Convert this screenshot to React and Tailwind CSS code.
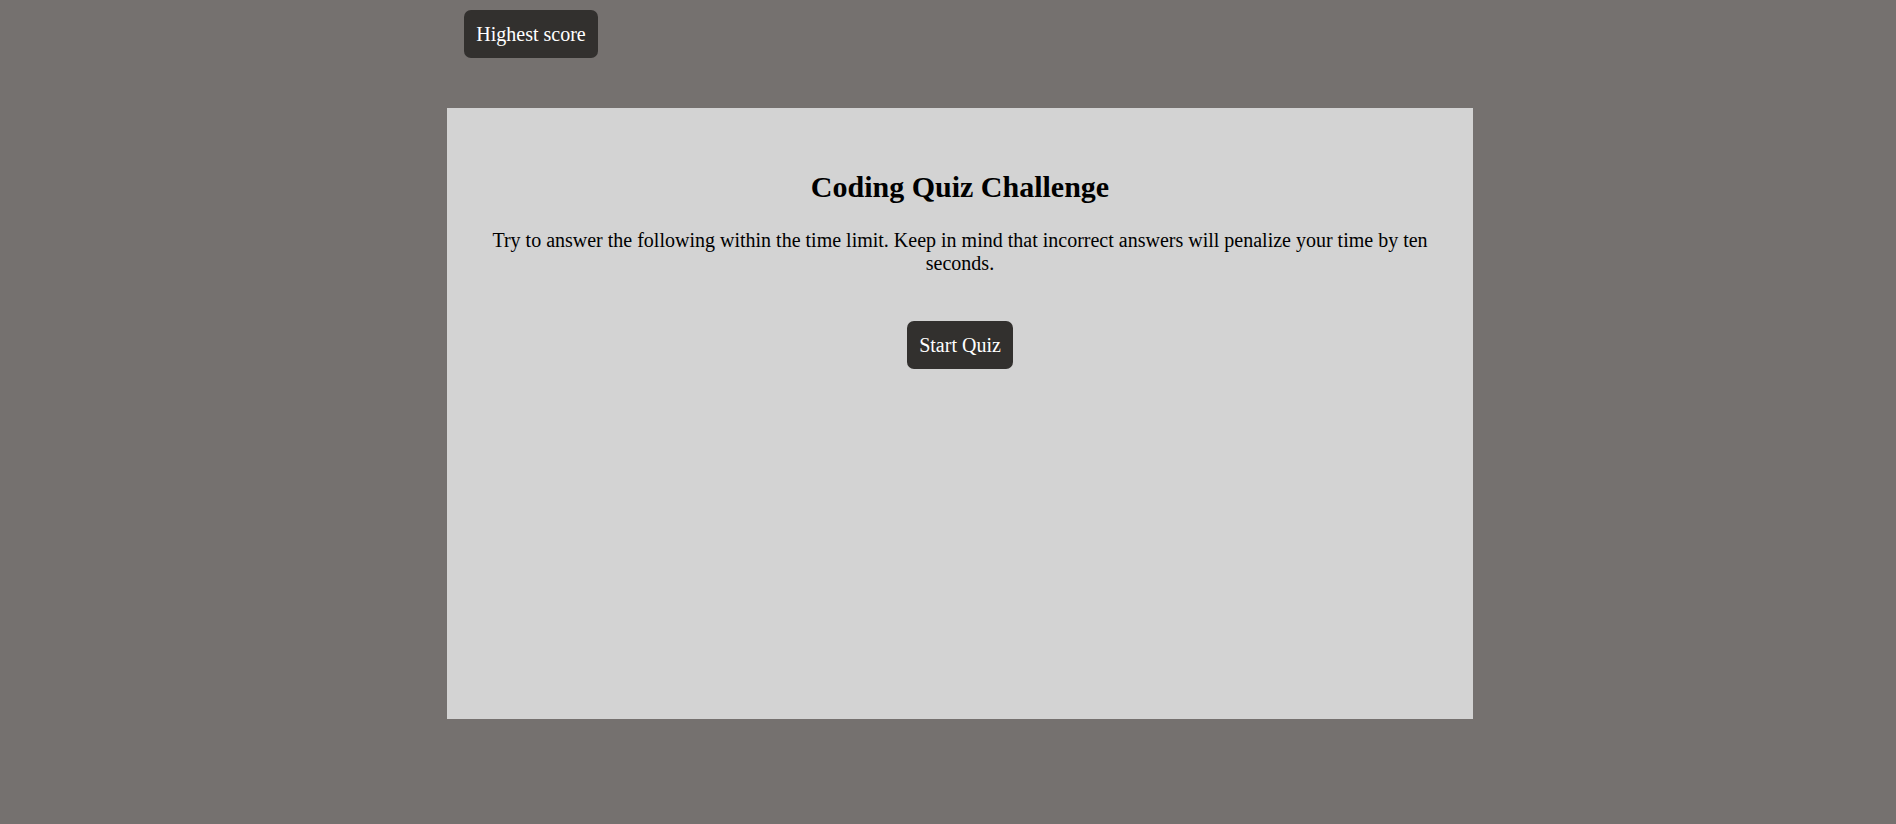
export default function App() {
  return (
    <div
      className="min-h-screen w-full bg-[#75716f] flex flex-col"
      style={{ fontFamily: '"Liberation Serif", "Times New Roman", serif' }}
    >
      <div className="pl-[464px] pt-[10px]">
        <button className="h-[48px] w-[134px] flex items-center justify-center whitespace-nowrap rounded-[7px] bg-[#32302e] text-white text-[20px] leading-[23px]">
          Highest score
        </button>
      </div>
      <div className="ml-[447px] mt-[50px] w-[1026px] h-[611px] bg-[#d3d3d3] px-[40px] pt-[62px] flex flex-col items-center text-black">
        <h2 className="text-[30px] font-bold leading-[34px] text-center">Coding Quiz Challenge</h2>
        <p className="mt-[25px] text-[20px] leading-[23px] text-center">
          Try to answer the following within the time limit. Keep in mind that incorrect answers will penalize your time by ten seconds.
        </p>
        <button className="mt-[46px] h-[48px] w-[106px] flex items-center justify-center whitespace-nowrap rounded-[7px] bg-[#32302e] text-white text-[20px] leading-[23px]">
          Start Quiz
        </button>
      </div>
    </div>
  );
}
